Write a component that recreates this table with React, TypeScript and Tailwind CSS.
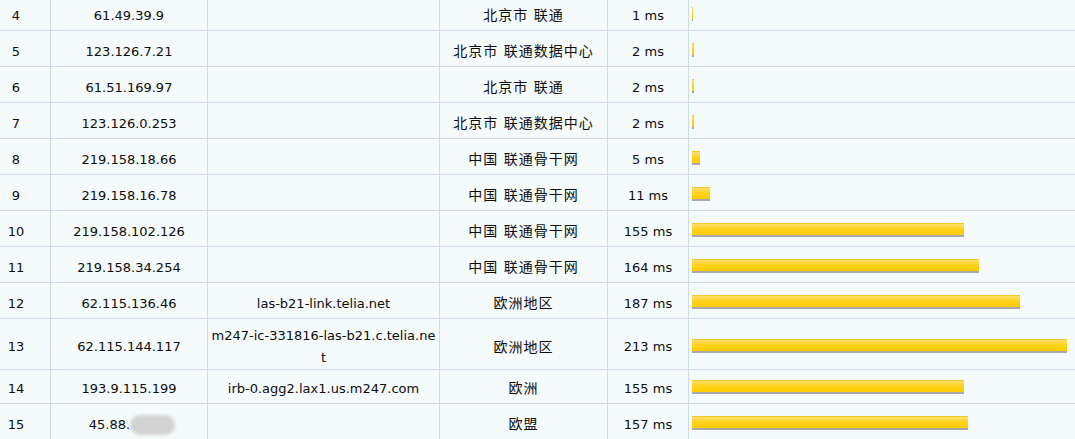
const ROWS = [
  { hop: 4, ip: "61.49.39.9", host: "", loc: "北京市 联通", ms: 1, bar: 1 },
  { hop: 5, ip: "123.126.7.21", host: "", loc: "北京市 联通数据中心", ms: 2, bar: 2 },
  { hop: 6, ip: "61.51.169.97", host: "", loc: "北京市 联通", ms: 2, bar: 2 },
  { hop: 7, ip: "123.126.0.253", host: "", loc: "北京市 联通数据中心", ms: 2, bar: 2 },
  { hop: 8, ip: "219.158.18.66", host: "", loc: "中国 联通骨干网", ms: 5, bar: 8 },
  { hop: 9, ip: "219.158.16.78", host: "", loc: "中国 联通骨干网", ms: 11, bar: 18 },
  { hop: 10, ip: "219.158.102.126", host: "", loc: "中国 联通骨干网", ms: 155, bar: 272 },
  { hop: 11, ip: "219.158.34.254", host: "", loc: "中国 联通骨干网", ms: 164, bar: 287 },
  { hop: 12, ip: "62.115.136.46", host: "las-b21-link.telia.net", loc: "欧洲地区", ms: 187, bar: 328 },
  { hop: 13, ip: "62.115.144.117", host: "m247-ic-331816-las-b21.c.telia.net", loc: "欧洲地区", ms: 213, bar: 375 },
  { hop: 14, ip: "193.9.115.199", host: "irb-0.agg2.lax1.us.m247.com", loc: "欧洲", ms: 155, bar: 272 },
  { hop: 15, ip: "45.88.", host: "", loc: "欧盟", ms: 157, bar: 276, masked: true },
];

const cell = "border-r border-b border-[#cbdaf0] flex items-center pt-[6px]";

export default function App() {
  return (
    <div className="h-[439px] w-[1075px] overflow-hidden bg-[#f5fafa] text-[13px] text-[#0d0d0d] font-['DejaVu_Sans','Noto_Sans_CJK_SC',sans-serif]">
      <div className="-mt-[5px]">
        {ROWS.map(r => {
          const tall = r.hop === 13;
          return (
            <div
              key={r.hop}
              className={`grid grid-cols-[51px_157px_232px_168px_81px_1fr] ${tall ? "h-[49px]" : "h-[36px]"}`}
            >
              <div className={`${cell} justify-center pr-[18px]`}>{r.hop}</div>
              <div className={`${cell} justify-center`}>
                {r.masked ? (
                  <span className="flex items-center ml-[6px]">
                    {r.ip}
                    <span className="inline-block w-[45px] h-[20px] rounded-[10px] bg-[#d3d3d3] blur-[1.5px]" />
                  </span>
                ) : (
                  r.ip
                )}
              </div>
              <div className={`${cell} justify-center text-center leading-[22px]`}>
                {tall ? (
                  <span>
                    m247-ic-331816-las-b21.c.telia.ne
                    <br />t
                  </span>
                ) : (
                  r.host
                )}
              </div>
              <div className={`${cell} justify-center text-[14px] tracking-[1px]`}>{r.loc}</div>
              <div className={`${cell} justify-center`}>{r.ms} ms</div>
              <div className="border-b border-[#cbdaf0] flex items-center pt-[3px] pl-[3px]">
                <div
                  className="h-[14px] border-b-2 border-[#a8a8a8] bg-[linear-gradient(to_bottom,#efbd00_0,#ffdf6a_12%,#ffd21a_50%,#ffcc00_100%)]"
                  style={{ width: r.bar }}
                />
              </div>
            </div>
          );
        })}
      </div>
    </div>
  );
}
